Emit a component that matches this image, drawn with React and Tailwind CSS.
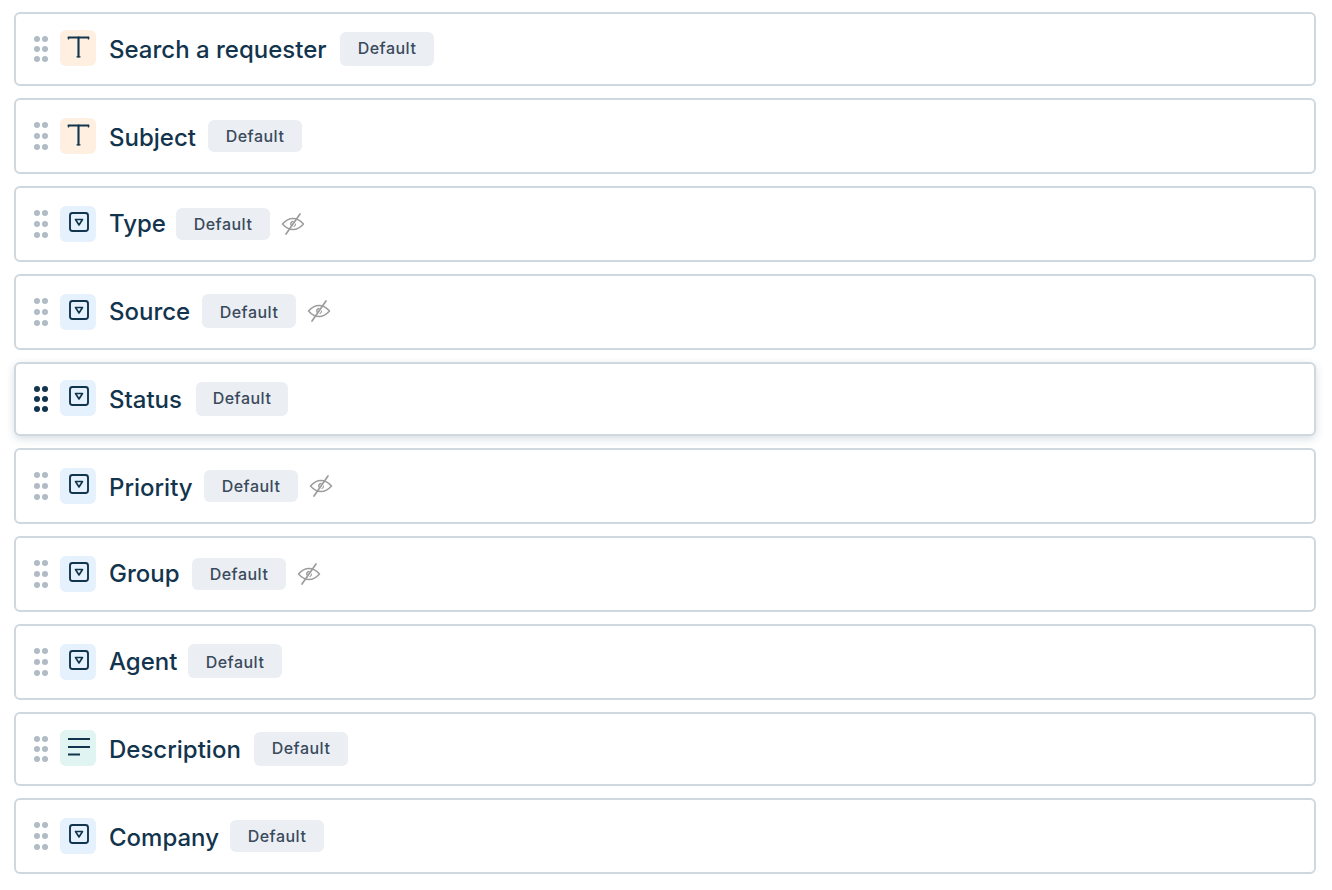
import React from "react";

const TextIcon = () => (
  <svg width="24" height="24" viewBox="0 0 24 24" fill="none" stroke="#12344d" strokeLinecap="round">
    <path d="M2.5 3.5h20" strokeWidth="1.8" />
    <path d="M2.5 3.5v1.4M22.5 3.5v1.4" strokeWidth="1.4" />
    <path d="M12.5 3.500v19" strokeWidth="2.1" />
    <path d="M11 22.800h3" strokeWidth="1.3" />
  </svg>
);

const DropdownIcon = () => (
  <svg width="22" height="22" viewBox="0 0 22 22" fill="none" stroke="#12344d">
    <rect x="2" y="2" width="18" height="18" rx="2.5" strokeWidth="1.9" />
    <path d="M7.5 8.5h7L11 14z" strokeWidth="1.6" strokeLinejoin="round" />
  </svg>
);

const ParagraphIcon = () => (
  <svg width="24" height="24" viewBox="0 0 24 24" fill="none" stroke="#12344d" strokeWidth="1.8">
    <path d="M2 3h22M2 11h22M2 18.5h12" />
  </svg>
);

const EyeOff = () => (
  <svg width="24" height="24" viewBox="0 0 24 24" fill="none" stroke="#9c9c9c" strokeWidth="1.5" strokeLinecap="round" strokeLinejoin="round">
    <path d="M1.5 12C5 8 8.5 6.5 12 6.5s7 1.5 10.5 5.5C19 16 15.5 17.5 12 17.5S5 16 1.5 12z" />
    <path d="M12 9.5a2.5 2.5 0 0 0-2 3.5" />
    <path d="M14.5 12a2.5 2.5 0 0 1-1.5 2.5" strokeWidth="1.1" />
    <path d="M19 2 5 22" strokeWidth="1.7" />
  </svg>
);

const iconMap = {
  text: { bg: "bg-[#feefe0]", icon: TextIcon, cls: "pb-1" },
  dropdown: { bg: "bg-[#e5f2fd]", icon: DropdownIcon, cls: "pb-1 pl-[2px]" },
  paragraph: { bg: "bg-[#e0f5f1]", icon: ParagraphIcon, cls: "" },
};

// row metrics differ by a pixel or two from row to row
const fields = [
  { name: "Search a requester", type: "text", short: true, nameCls: "w-[219px] mt-[2px]", badgeCls: "w-[94px] h-[34px] mt-[2px] pb-[2px]" },
  { name: "Subject", type: "text", nameCls: "w-[87px] mt-[2px]", badgeCls: "w-[94px] h-[32px] mt-[2px]" },
  { name: "Type", type: "dropdown", nameCls: "w-[55px]", badgeCls: "w-[94px] h-[32px] mt-[2px]", eyeCls: "mt-[6px]" },
  { name: "Source", type: "dropdown", nameCls: "w-[81px]", badgeCls: "w-[94px] h-[34px] pt-[2px]", eyeCls: "mt-[5px]" },
  { name: "Status", type: "dropdown", short: true, active: true, nameCls: "w-[75px] mt-[2px]", badgeCls: "w-[92px] h-[34px] mt-[2px] pb-[2px]" },
  { name: "Priority", type: "dropdown", nameCls: "w-[83px] mt-[2px]", badgeCls: "w-[94px] h-[32px] mt-[2px]", eyeCls: "mt-[6px]" },
  { name: "Group", type: "dropdown", nameCls: "w-[71px]", badgeCls: "w-[94px] h-[32px] mt-[2px]", eyeCls: "mt-[6px]" },
  { name: "Agent", type: "dropdown", nameCls: "w-[67px]", badgeCls: "w-[94px] h-[34px] pt-[2px]" },
  { name: "Description", type: "paragraph", short: true, nameCls: "w-[133px] mt-[2px]", badgeCls: "w-[94px] h-[34px] mt-[2px] pb-[2px]" },
  { name: "Company", type: "dropdown", nameCls: "w-[109px] mt-[2px]", badgeCls: "w-[94px] h-[32px] mt-[2px]" },
];

const DragHandle = ({ active, short }) => (
  <div
    className={`grid grid-cols-2 gap-x-[3px] w-[13px] mr-[13px] ${
      short ? "gap-y-[4px] mt-[6px]" : "gap-y-[5px] mt-[4px]"
    }`}
  >
    {[0, 1, 2, 3, 4, 5].map((i) => (
      <span
        key={i}
        className={`w-[6px] h-[6px] rounded-full ${active ? "bg-[#12344d]" : "bg-[#b1bbc6]"}`}
      />
    ))}
  </div>
);

const FieldRow = ({ field }) => {
  const meta = iconMap[field.type];
  const Icon = meta.icon;
  return (
    <div
      className={`flex items-start bg-white border-2 border-[#cfd7df] rounded-[6px] pl-[18px] pb-[18px] ${
        field.short ? "pt-[16px]" : "pt-[18px]"
      } ${field.active ? "shadow-[0_3px_8px_rgba(18,52,77,0.16)]" : ""}`}
    >
      <DragHandle active={field.active} short={field.short} />
      <div className={`w-[36px] h-[36px] rounded-[6px] flex items-center justify-center ${meta.bg} ${meta.cls}`}>
        <Icon />
      </div>
      <span className={`ml-[13px] h-[34px] text-[24px] leading-[36px] font-medium whitespace-nowrap text-[#12344d] ${field.nameCls}`}>
        {field.name}
      </span>
      <span
        className={`ml-[12px] flex items-center justify-center rounded-[6px] bg-[#ebeff3] text-[16px] font-medium tracking-[0.5px] text-[#3a4a5c] ${field.badgeCls}`}
      >
        Default
      </span>
      {field.eyeCls && (
        <span className={`ml-[11px] ${field.eyeCls}`}>
          <EyeOff />
        </span>
      )}
    </div>
  );
};

export default function App() {
  return (
    <div className="min-h-screen bg-white pl-[14px] pr-[16px] pt-[12px] flex flex-col gap-[12px] font-['Inter',sans-serif]">
      {fields.map((field) => (
        <FieldRow key={field.name} field={field} />
      ))}
    </div>
  );
}
